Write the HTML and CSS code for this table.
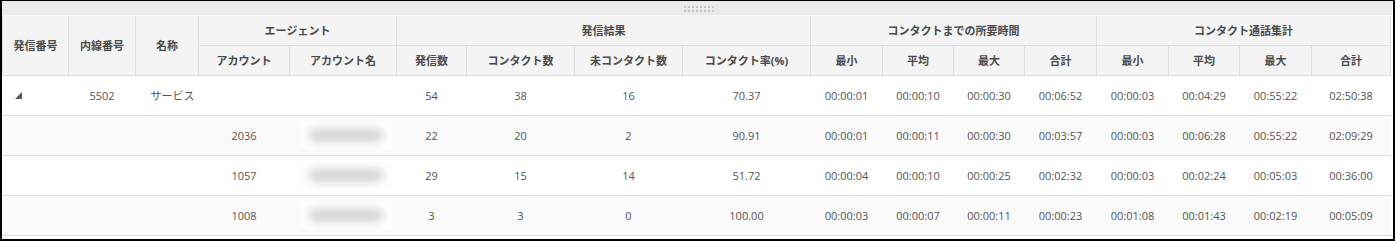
FILE: index.html
```html
<!DOCTYPE html>
<html lang="ja">
<head>
<meta charset="utf-8">
<title>発信集計</title>
<link rel="stylesheet" href="styles.css">
</head>
<body>
<div class="frame">
  <div class="dragbar">
    <svg class="grip" width="30" height="6" viewBox="0 0 30 6">
      <g fill="#c6c6c6">
        <rect x="0" y="0" width="2" height="2"/><rect x="4" y="0" width="2" height="2"/><rect x="8" y="0" width="2" height="2"/><rect x="12" y="0" width="2" height="2"/><rect x="16" y="0" width="2" height="2"/><rect x="20" y="0" width="2" height="2"/><rect x="24" y="0" width="2" height="2"/><rect x="28" y="0" width="2" height="2"/>
        <rect x="0" y="4" width="2" height="2"/><rect x="4" y="4" width="2" height="2"/><rect x="8" y="4" width="2" height="2"/><rect x="12" y="4" width="2" height="2"/><rect x="16" y="4" width="2" height="2"/><rect x="20" y="4" width="2" height="2"/><rect x="24" y="4" width="2" height="2"/><rect x="28" y="4" width="2" height="2"/>
      </g>
    </svg>
  </div>
  <div class="tablewrap">
    <table class="grid">
      <colgroup>
        <col class="w66"><col class="w67"><col class="w63"><col class="w91"><col class="w107">
        <col class="w70"><col class="w108"><col class="w108"><col class="w128">
        <col class="w72"><col class="w71"><col class="w71"><col class="w72">
        <col class="w72"><col class="w71"><col class="w72"><col class="w79">
      </colgroup>
      <thead>
        <tr>
          <th rowspan="2">発信番号</th>
          <th rowspan="2">内線番号</th>
          <th rowspan="2">名称</th>
          <th colspan="2">エージェント</th>
          <th colspan="4">発信結果</th>
          <th colspan="4">コンタクトまでの所要時間</th>
          <th colspan="4">コンタクト通話集計</th>
        </tr>
        <tr>
          <th>アカウント</th>
          <th>アカウント名</th>
          <th>発信数</th>
          <th>コンタクト数</th>
          <th>未コンタクト数</th>
          <th>コンタクト率(%)</th>
          <th>最小</th>
          <th>平均</th>
          <th>最大</th>
          <th>合計</th>
          <th>最小</th>
          <th>平均</th>
          <th>最大</th>
          <th>合計</th>
        </tr>
      </thead>
      <tbody>
        <tr class="parent">
          <td class="toggle"><svg class="tri" width="7" height="7" viewBox="0 0 7 7"><polygon points="7,0 7,7 0,7" fill="#5a5a5a"/></svg></td>
          <td>5502</td>
          <td class="name">サービス</td>
          <td></td>
          <td></td>
          <td>54</td>
          <td>38</td>
          <td>16</td>
          <td>70.37</td>
          <td>00:00:01</td>
          <td>00:00:10</td>
          <td>00:00:30</td>
          <td>00:06:52</td>
          <td>00:00:03</td>
          <td>00:04:29</td>
          <td>00:55:22</td>
          <td>02:50:38</td>
        </tr>
        <tr class="alt">
          <td></td><td></td><td></td>
          <td>2036</td>
          <td><span class="masked"><span class="blob"></span></span></td>
          <td>22</td>
          <td>20</td>
          <td>2</td>
          <td>90.91</td>
          <td>00:00:01</td>
          <td>00:00:11</td>
          <td>00:00:30</td>
          <td>00:03:57</td>
          <td>00:00:03</td>
          <td>00:06:28</td>
          <td>00:55:22</td>
          <td>02:09:29</td>
        </tr>
        <tr>
          <td></td><td></td><td></td>
          <td>1057</td>
          <td><span class="masked"><span class="blob"></span></span></td>
          <td>29</td>
          <td>15</td>
          <td>14</td>
          <td>51.72</td>
          <td>00:00:04</td>
          <td>00:00:10</td>
          <td>00:00:25</td>
          <td>00:02:32</td>
          <td>00:00:03</td>
          <td>00:02:24</td>
          <td>00:05:03</td>
          <td>00:36:00</td>
        </tr>
        <tr class="alt">
          <td></td><td></td><td></td>
          <td>1008</td>
          <td><span class="masked"><span class="blob"></span></span></td>
          <td>3</td>
          <td>3</td>
          <td>0</td>
          <td>100.00</td>
          <td>00:00:03</td>
          <td>00:00:07</td>
          <td>00:00:11</td>
          <td>00:00:23</td>
          <td>00:01:08</td>
          <td>00:01:43</td>
          <td>00:02:19</td>
          <td>00:05:09</td>
        </tr>
      </tbody>
    </table>
  </div>
</div>
</body>
</html>
```
FILE: styles.css
```css
* { box-sizing: border-box; }
html, body { margin: 0; padding: 0; background: #fff; }
body {
  font-family: "Open Sans", "Noto Sans CJK JP", sans-serif;
  font-size: 11px;
  color: #555;
}
.frame {
  width: 1395px;
  height: 241px;
  border-style: solid;
  border-color: #000;
  border-width: 1px 2px 2px 2px;
  overflow: hidden;
  background: #fff;
}
.dragbar {
  height: 14px;
  margin-right: 1px;
  background: #ebebeb;
  display: flex;
  justify-content: center;
  align-items: center;
}
.grip {
  display: block;
  margin-left: 4px;
  margin-top: 1px;
}
.tablewrap {
  margin-right: 1px;
  border-top: 1px solid #f6f6f6;
}
.grid {
  width: 1388px;
  border-collapse: collapse;
  table-layout: fixed;
}
.w66 { width: 66px; } .w67 { width: 67px; } .w63 { width: 63px; }
.w91 { width: 91px; } .w107 { width: 107px; } .w70 { width: 70px; }
.w108 { width: 108px; } .w128 { width: 128px; } .w72 { width: 72px; }
.w71 { width: 71px; } .w79 { width: 79px; }
.grid th {
  height: 30px;
  padding: 0 4px;
  background: #f4f4f4;
  border: 1px solid #dedede;
  border-top: 0;
  font-weight: bold;
  color: #4a4a4a;
  text-align: center;
  vertical-align: middle;
  white-space: nowrap;
  font-size: 11px;
}
.grid thead tr:first-child th { height: 29px; }
.grid td {
  height: 40px;
  padding: 0 4px;
  text-align: center;
  vertical-align: middle;
  border-bottom: 1px solid #dcdcdc;
  white-space: nowrap;
}
.grid tr.alt td { background: #fafafa; }
.grid td.toggle { text-align: left; padding-left: 12px; }
.grid td.toggle .tri { display: block; margin-top: 1px; }
.grid td.name { text-align: left; padding-left: 15px; }
.masked {
  display: inline-flex;
  align-items: center;
  justify-content: center;
  width: 92px;
  height: 28px;
  margin-left: 6px;
  background: #fdfdfd;
  vertical-align: middle;
}
.blob {
  display: block;
  width: 74px;
  height: 13px;
  border-radius: 7px;
  background: #d4d4d4;
  filter: blur(4px);
}
```
